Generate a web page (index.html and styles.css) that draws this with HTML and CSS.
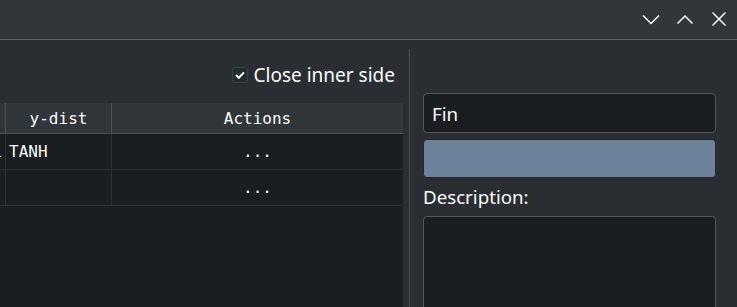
FILE: index.html
```html
<!DOCTYPE html>
<html lang="en">
<head>
    <meta charset="UTF-8">
    <meta name="viewport" content="width=device-width, initial-scale=1.0">
    <title>Fin Editor</title>
    <link rel="stylesheet" href="styles.css">
</head>
<body>
    <div class="titlebar">
        <button class="win-btn" title="Minimize">
            <svg viewBox="0 0 18 18"><polyline points="1,4.5 9,12.5 17,4.5"/></svg>
        </button>
        <button class="win-btn" title="Maximize">
            <svg viewBox="0 0 18 18"><polyline points="1.5,12.5 9,5 16.5,12.5"/></svg>
        </button>
        <button class="win-btn" title="Close">
            <svg viewBox="0 0 18 18"><path d="M2.5 1.5 L15.5 14.5 M15.5 1.5 L2.5 14.5"/></svg>
        </button>
    </div>

    <div class="main">
        <div class="left-panel">
            <div class="option-row">
                <label class="checkbox">
                    <span class="check-box">
                        <svg viewBox="0 0 14 14"><polyline points="3,7 5.8,9.8 11,4.4"/></svg>
                    </span>
                    Close inner side
                </label>
            </div>
            <div class="table-wrap">
                <table class="points">
                    <thead>
                        <tr>
                            <th class="col-prev">x-dist</th>
                            <th class="col-y">y-dist</th>
                            <th class="col-actions">Actions</th>
                        </tr>
                    </thead>
                    <tbody>
                        <tr>
                            <td class="col-prev">0.01</td>
                            <td>TANH</td>
                            <td class="actions">...</td>
                        </tr>
                        <tr>
                            <td class="col-prev"></td>
                            <td></td>
                            <td class="actions">...</td>
                        </tr>
                    </tbody>
                </table>
            </div>
        </div>

        <div class="right-panel">
            <input class="text-input" type="text" value="Fin">
            <button class="color-button"></button>
            <div class="field-label">Description:</div>
            <textarea class="description"></textarea>
        </div>
    </div>
</body>
</html>
```

FILE: styles.css
```css
body {
    margin: 0;
    font-family: "Noto Sans", sans-serif;
    background: #2a2e32;
    color: #fcfcfc;
    width: 737px;
    height: 307px;
    overflow: hidden;
}

.titlebar {
    height: 39px;
    background: #31363b;
    border-bottom: 1px solid #5d6166;
    display: flex;
    justify-content: flex-end;
    align-items: center;
    gap: 16px;
    padding-right: 9px;
}

.win-btn {
    width: 18px;
    height: 18px;
    padding: 0;
    border: none;
    background: none;
    display: flex;
}

.win-btn svg {
    width: 18px;
    height: 18px;
    fill: none;
    stroke: #fcfcfc;
    stroke-width: 1.5;
}

.main {
    display: flex;
    height: 267px;
    overflow: hidden;
}

.left-panel {
    width: 403px;
    padding-top: 20px;
    margin-right: 6px;
}

.option-row {
    height: 30px;
    display: flex;
    justify-content: flex-end;
    align-items: center;
    padding-right: 8px;
    margin-bottom: 13px;
}

.checkbox {
    display: flex;
    align-items: center;
    gap: 6px;
    font-size: 19px;
}

.check-box {
    width: 14px;
    height: 14px;
    border: 1px solid #34424a;
    border-radius: 3px;
    background: #222a2f;
    display: flex;
}

.check-box svg {
    width: 14px;
    height: 14px;
    fill: none;
    stroke: #fcfcfc;
    stroke-width: 2;
}

.table-wrap {
    overflow: hidden;
    height: 204px;
    background: #1b1e20;
}

.points {
    border-collapse: collapse;
    margin-left: -95px;
    font-family: "DejaVu Sans Mono", monospace;
    font-size: 16px;
    table-layout: fixed;
    width: 498px;
}

.points th {
    height: 30px;
    padding: 0;
    background: #31363b;
    font-weight: normal;
    color: #fcfcfc;
    border-right: 1px solid #4d5257;
    border-bottom: 1px solid #4d5257;
}

.points td {
    height: 35px;
    padding: 0 3px;
    border-right: 1px solid #2d3135;
    border-bottom: 1px solid #2d3135;
    line-height: 35px;
}

.col-prev {
    width: 100px;
}

.points td.col-prev {
    padding: 0 3px 0 0;
    text-align: right;
}

.col-y {
    width: 105px;
}

.points td.actions {
    text-align: center;
}

.points th:last-child,
.points td:last-child {
    border-right: none;
}

.right-panel {
    flex: 1;
    margin-top: 9px;
    border-left: 1px solid #4a4e53;
    padding: 44px 21px 0 13px;
    display: flex;
    flex-direction: column;
    overflow: hidden;
}

.right-panel > * {
    flex-shrink: 0;
}

.text-input {
    height: 40px;
    box-sizing: border-box;
    border: 1px solid #53575c;
    border-radius: 4px;
    background: #1b1e20;
    color: #fcfcfc;
    font-family: "Noto Sans", sans-serif;
    font-size: 18.7px;
    padding: 0 8px;
    margin: 0;
    outline: none;
}

.color-button {
    height: 39px;
    margin-top: 6px;
    border: 1px solid #25292d;
    border-radius: 4px;
    background: #6f829c;
}

.field-label {
    font-size: 18.7px;
    margin-top: 5px;
    line-height: 28px;
}

.description {
    margin-top: 5px;
    height: 120px;
    box-sizing: border-box;
    border: 1px solid #53575c;
    border-radius: 4px;
    background: #1b1e20;
    resize: none;
    outline: none;
}
```
